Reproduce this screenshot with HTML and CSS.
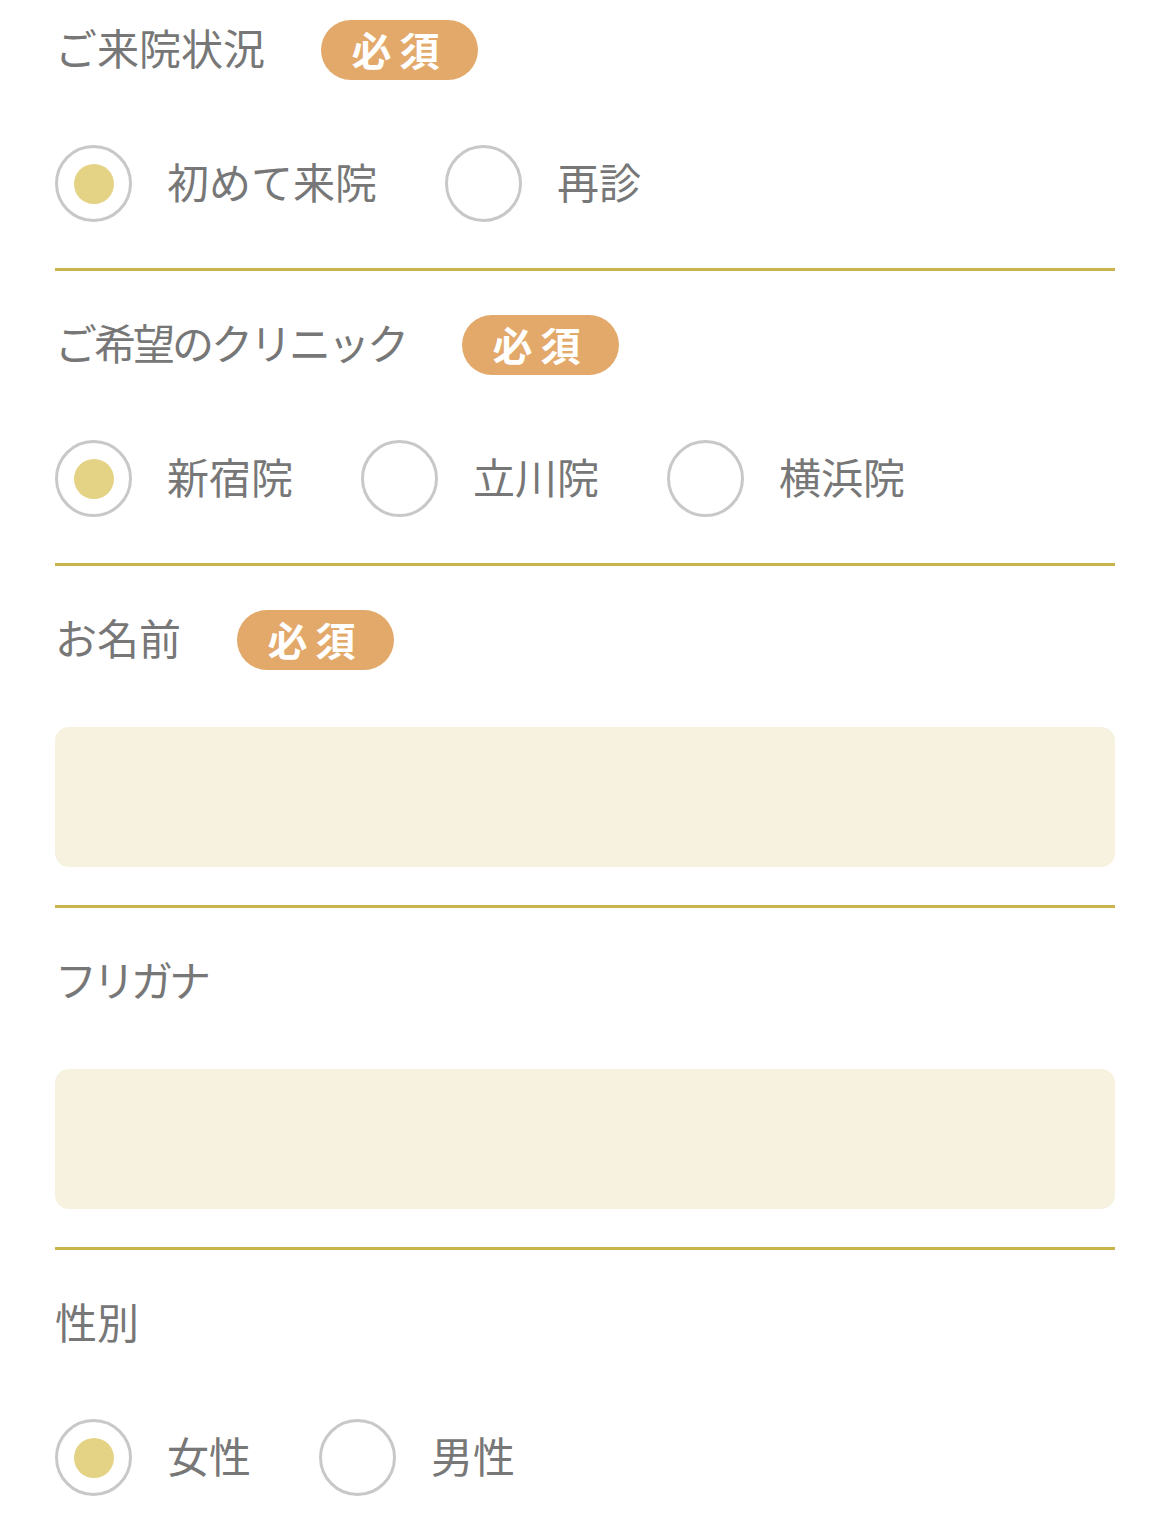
FILE: index.html
```html
<!DOCTYPE html>
<html lang="ja">
<head>
<meta charset="utf-8">
<link rel="stylesheet" href="styles.css">
</head>
<body>
<form class="form">
  <section class="field field-first">
    <div class="label-row"><span class="label">ご来院状況</span><span class="badge">必須</span></div>
    <div class="radios">
      <label class="radio"><span class="circle checked"></span><span class="radio-text">初めて来院</span></label>
      <label class="radio"><span class="circle"></span><span class="radio-text">再診</span></label>
    </div>
  </section>
  <section class="field">
    <div class="label-row"><span class="label label-kana">ご希望のクリニック</span><span class="badge">必須</span></div>
    <div class="radios">
      <label class="radio"><span class="circle checked"></span><span class="radio-text">新宿院</span></label>
      <label class="radio"><span class="circle"></span><span class="radio-text">立川院</span></label>
      <label class="radio"><span class="circle"></span><span class="radio-text">横浜院</span></label>
    </div>
  </section>
  <section class="field field-input">
    <div class="label-row"><span class="label">お名前</span><span class="badge">必須</span></div>
    <div class="input"></div>
  </section>
  <section class="field field-input">
    <div class="label-row"><span class="label label-kana-wide">フリガナ</span></div>
    <div class="input"></div>
  </section>
  <section class="field field-last">
    <div class="label-row"><span class="label">性別</span></div>
    <div class="radios">
      <label class="radio"><span class="circle checked"></span><span class="radio-text">女性</span></label>
      <label class="radio"><span class="circle"></span><span class="radio-text">男性</span></label>
    </div>
  </section>
</form>
</body>
</html>
```

FILE: styles.css
```css
html, body {
  margin: 0;
  padding: 0;
  background: #ffffff;
}
body {
  font-family: "Noto Sans CJK JP", "Noto Sans", sans-serif;
  color: #777777;
}
.form {
  padding: 0 55px;
}
.field {
  padding: 44px 0 46px;
  border-bottom: 3px solid #c9b44c;
}
.field-first {
  padding-top: 20px;
  padding-bottom: 46px;
}
.field-input {
  padding-bottom: 38px;
}
.field-last {
  border-bottom: none;
  padding-bottom: 22px;
}
.label-row {
  display: flex;
  align-items: center;
  height: 60px;
  gap: 56px;
}
.label {
  font-size: 42px;
  line-height: 54px;
  padding-bottom: 6px;
  font-weight: 400;
  color: #777777;
}
.label-kana {
  letter-spacing: -3px;
}
.label-kana-wide {
  letter-spacing: -4px;
}
.badge {
  display: flex;
  align-items: center;
  justify-content: center;
  width: 157px;
  height: 60px;
  border-radius: 30px;
  background: #e3a96a;
  color: #ffffff;
  font-size: 40px;
  font-weight: 700;
  letter-spacing: 8px;
  line-height: 1;
  padding-bottom: 2px;
  box-sizing: border-box;
}
.radios {
  display: flex;
  align-items: center;
  gap: 68px;
  margin-top: 65px;
}
.radio {
  display: flex;
  align-items: center;
  gap: 35px;
}
.circle {
  box-sizing: border-box;
  width: 77px;
  height: 77px;
  border: 3px solid #c8c8c8;
  border-radius: 50%;
  display: flex;
  align-items: center;
  justify-content: center;
  flex: none;
}
.circle.checked::after {
  content: "";
  width: 40px;
  height: 40px;
  border-radius: 50%;
  background: #e4d285;
}
.radio-text {
  font-size: 42px;
  line-height: 54px;
  padding-bottom: 6px;
  color: #777777;
}
.input {
  margin-top: 57px;
  height: 140px;
  border-radius: 14px;
  background: #f7f1df;
}
```
